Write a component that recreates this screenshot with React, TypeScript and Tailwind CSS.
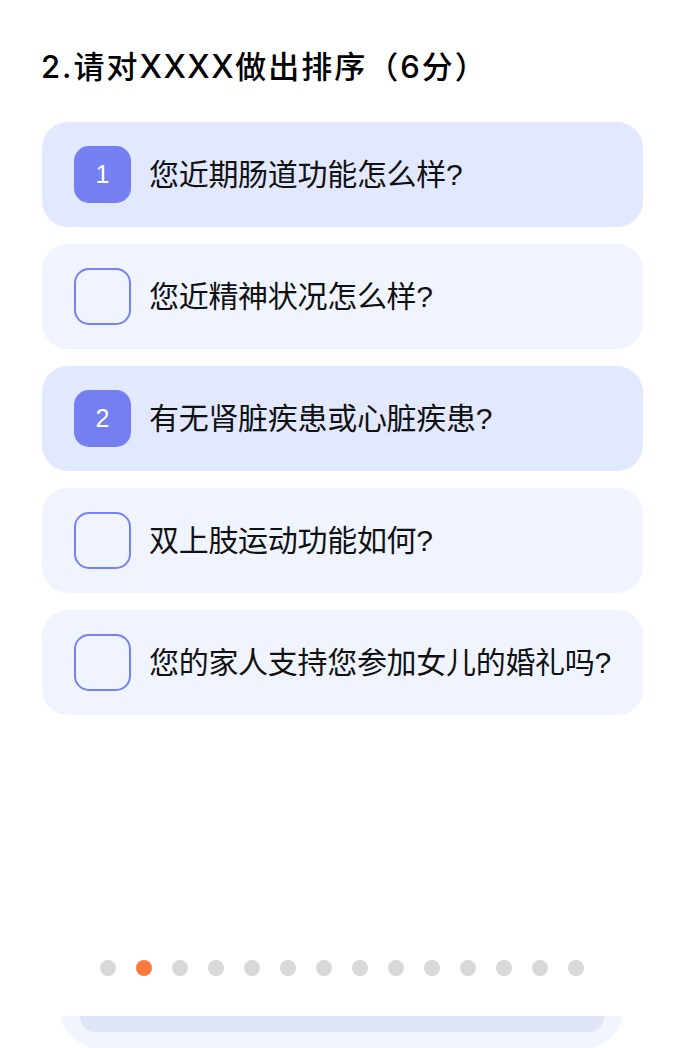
const items = [
  { text: '您近期肠道功能怎么样?', order: 1 },
  { text: '您近精神状况怎么样?', order: 0 },
  { text: '有无肾脏疾患或心脏疾患?', order: 2 },
  { text: '双上肢运动功能如何?', order: 0 },
  { text: '您的家人支持您参加女儿的婚礼吗?', order: 0 },
];

const dots = Array.from({ length: 14 }, (_, i) => i);

export default function App() {
  return (
    <div
      className="relative flex h-[1048px] w-[684px] flex-col overflow-hidden bg-white text-black"
      style={{ fontFamily: '"Liberation Sans", "Noto Sans CJK SC", sans-serif' }}
    >
      <h1
        className="pl-[41px] pt-[43px] text-[31px] font-medium leading-[48px] tracking-[2px]"
        style={{ fontFamily: 'Inter, "Noto Sans CJK SC", sans-serif' }}
      >
        2.请对<span className="text-[32px] tracking-[1.5px]">XXXX</span>做出排序（6分）
      </h1>

      <div className="mt-[31px] flex flex-col gap-[17px] pl-[42px] pr-[41px]">
        {items.map((item) => {
          const selected = item.order > 0;
          return (
            <div
              key={item.text}
              className={
                'flex h-[105px] items-center rounded-[26px] pl-[32px] ' +
                (selected ? 'bg-[#e2e8fd]' : 'bg-[#f0f4fe]')
              }
            >
              {selected ? (
                <div className="flex h-[57px] w-[57px] shrink-0 items-center justify-center rounded-[15px] bg-[#7480f2] text-[25px] font-light text-white">
                  {item.order}
                </div>
              ) : (
                <div className="h-[57px] w-[57px] shrink-0 rounded-[15px] border-2 border-[#7682f2]" />
              )}
              <span className="ml-[18px] whitespace-nowrap text-[30px] leading-none tracking-[-0.3px] text-[#111]">
                {item.text}
              </span>
            </div>
          );
        })}
      </div>

      <div className="mt-auto flex justify-center gap-[20px] pb-[72px]">
        {dots.map((i) => (
          <div
            key={i}
            className={
              'h-[16px] w-[16px] rounded-full ' +
              (i === 1 ? 'bg-[#ff7a3d]' : 'bg-[#d8d8d8]')
            }
          />
        ))}
      </div>

      {/* stacked card peeking from below */}
      <div className="absolute bottom-[-2px] left-[62px] h-[34px] w-[560px] overflow-hidden rounded-b-[46px_34px] bg-[#f1f5fe]">
        <div className="mx-[18px] h-[16px] rounded-b-[14px_16px] bg-[#e0e6f8]" />
      </div>
    </div>
  );
}
